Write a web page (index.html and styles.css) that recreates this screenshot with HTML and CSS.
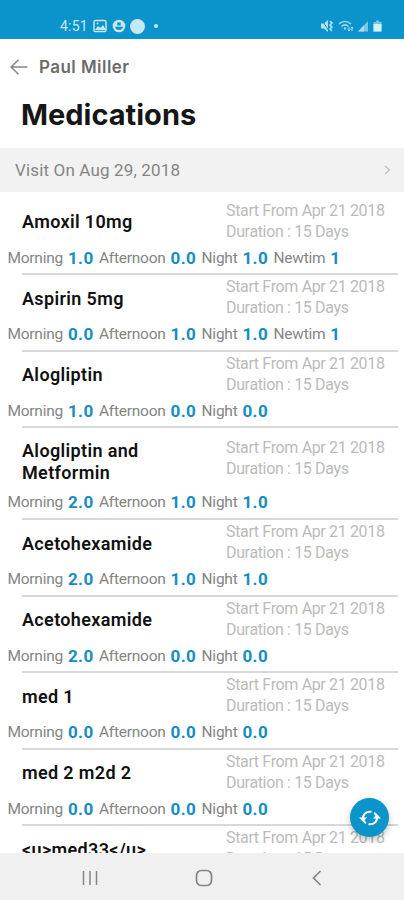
FILE: index.html
```html
<!DOCTYPE html>
<html lang="en">
<head>
    <meta charset="UTF-8">
    <meta name="viewport" content="width=device-width, initial-scale=1.0">
    <title>Medications</title>
    <link rel="stylesheet" href="styles.css">
</head>
<body>
    <div class="status-bar">
        <div class="status-left">
            <span class="time">4:51</span>
            <svg class="ic-photo" width="14" height="14" viewBox="0 0 14 14"><rect x="1" y="1.5" width="12" height="11" rx="1.5" fill="none" stroke="#c5e8f4" stroke-width="1.5"/><path d="M2 11l3-4 2.2 2L10 6l3 5z" fill="#c5e8f4"/><circle cx="4.5" cy="4.5" r="1" fill="#c5e8f4"/></svg>
            <svg class="ic-face" width="14" height="14" viewBox="0 0 14 14"><circle cx="7" cy="7" r="6.3" fill="#c5e8f4"/><path d="M5.3 3.4h3.4v3H5.3zM3 7.8h8c-.5 2.2-2 3.3-4 3.3S3.500 10 3 7.800z" fill="#0b94cc"/></svg>
            <span class="blob"></span>
            <span class="dot"></span>
        </div>
        <svg class="status-right" width="62" height="14" viewBox="0 0 62 14" fill="#b5e2f2">
            <path d="M0 4.500h3L7 1v12L3 9.500H0z"/>
            <path d="M1 1l7 11" stroke="#0b94cc" stroke-width="1"/>
            <path d="M9 2l2 2-2 2 2 2-2 2 2 2" fill="none" stroke="#b5e2f2" stroke-width="1.600"/>
            <path d="M18 5c3.500-3.300 8.500-3.300 12 0M20.500 7.500c2.200-2 4.800-2 7 0" fill="none" stroke="#9bd5ec" stroke-width="1.600"/>
            <path d="M22.500 9c1-.9 2-.9 3 0L24 11z"/>
            <path d="M28 8v4M26.700 10.500L28 12l1.300-1.500M31 12V8M29.800 9.300L31 8l1.200 1.300" fill="none" stroke="#b5e2f2"/>
            <path d="M37 12.500L47 2v10.500z" fill="#78c5e4"/>
            <path d="M37 12.500l6-6.300v6.300z" fill="#a5daee"/>
            <path d="M52.500 3H55V1.500h3V3h2.500v9.500h-8z" fill="#78c5e4"/>
            <path d="M52.500 5h8v7.500h-8z" fill="#d4f0f8"/>
        </svg>
    </div>

    <header>
        <a class="back" href="#">
            <svg width="18" height="16" viewBox="0 0 18 16" fill="none" stroke="#858585" stroke-width="1.400"><path d="M17.500 8H1M8.500 .7L1 8l7.500 7.300"/></svg>
            <span>Paul Miller</span>
        </a>
        <h1>Medications</h1>
    </header>

    <div class="visit">
        <span>Visit On Aug 29, 2018</span>
        <svg width="7" height="10" viewBox="0 0 7 10" fill="none" stroke="#bdbdbd" stroke-width="1.200"><path d="M1 1l4.500 4L1 9"/></svg>
    </div>

    <main>
        <div class="med">
            <div class="top">
                <h2>Amoxil 10mg</h2>
                <p>Start From Apr 21 2018<br>Duration : 15 Days</p>
            </div>
            <div class="doses"><span>Morning</span><b>1.0</b><span>Afternoon</span><b>0.0</b><span>Night</span><b>1.0</b><span>Newtim</span><b>1</b></div>
        </div>
        <div class="med">
            <div class="top">
                <h2>Aspirin 5mg</h2>
                <p>Start From Apr 21 2018<br>Duration : 15 Days</p>
            </div>
            <div class="doses"><span>Morning</span><b>0.0</b><span>Afternoon</span><b>1.0</b><span>Night</span><b>1.0</b><span>Newtim</span><b>1</b></div>
        </div>
        <div class="med">
            <div class="top">
                <h2>Alogliptin</h2>
                <p>Start From Apr 21 2018<br>Duration : 15 Days</p>
            </div>
            <div class="doses"><span>Morning</span><b>1.0</b><span>Afternoon</span><b>0.0</b><span>Night</span><b>0.0</b></div>
        </div>
        <div class="med tall">
            <div class="top">
                <h2>Alogliptin and Metformin</h2>
                <p>Start From Apr 21 2018<br>Duration : 15 Days</p>
            </div>
            <div class="doses"><span>Morning</span><b>2.0</b><span>Afternoon</span><b>1.0</b><span>Night</span><b>1.0</b></div>
        </div>
        <div class="med">
            <div class="top">
                <h2>Acetohexamide</h2>
                <p>Start From Apr 21 2018<br>Duration : 15 Days</p>
            </div>
            <div class="doses"><span>Morning</span><b>2.0</b><span>Afternoon</span><b>1.0</b><span>Night</span><b>1.0</b></div>
        </div>
        <div class="med">
            <div class="top">
                <h2>Acetohexamide</h2>
                <p>Start From Apr 21 2018<br>Duration : 15 Days</p>
            </div>
            <div class="doses"><span>Morning</span><b>2.0</b><span>Afternoon</span><b>0.0</b><span>Night</span><b>0.0</b></div>
        </div>
        <div class="med">
            <div class="top">
                <h2>med 1</h2>
                <p>Start From Apr 21 2018<br>Duration : 15 Days</p>
            </div>
            <div class="doses"><span>Morning</span><b>0.0</b><span>Afternoon</span><b>0.0</b><span>Night</span><b>0.0</b></div>
        </div>
        <div class="med">
            <div class="top">
                <h2>med 2 m2d 2</h2>
                <p>Start From Apr 21 2018<br>Duration : 15 Days</p>
            </div>
            <div class="doses"><span>Morning</span><b>0.0</b><span>Afternoon</span><b>0.0</b><span>Night</span><b>0.0</b></div>
        </div>
        <div class="med">
            <div class="top">
                <h2>&lt;u&gt;med33&lt;/u&gt;</h2>
                <p>Start From Apr 21 2018<br>Duration : 15 Days</p>
            </div>
        </div>
    </main>

    <button class="refresh" aria-label="Refresh">
        <svg width="22" height="20" viewBox="0 0 22 20" fill="none" stroke="#fff" stroke-width="2"><path d="M4 10.500C3.800 6 7.500 3 12.500 3.800M18 9.500c.2 4.500-3.500 7.500-8.500 6.700"/><path d="M15 5c1.800.9 2.800 2.500 3 4.500M7 15c-1.800-.9-2.800-2.500-3-4.500"/><path d="M14 10.500h8l-4-4.300zM0 9.500h8l-4 4.300z" fill="#fff" stroke="none"/></svg>
    </button>

    <nav>
        <svg width="16" height="16" viewBox="0 0 16 16" stroke="#858585" stroke-width="1.500"><path d="M1.500 1v14M8 1v14M14.500 1v14"/></svg>
        <svg class="home" width="18" height="18" viewBox="0 0 18 18" fill="none" stroke="#858585" stroke-width="1.700"><rect x="1.500" y="1.500" width="15" height="15" rx="5"/></svg>
        <svg width="10" height="16" viewBox="0 0 10 16" fill="none" stroke="#858585" stroke-width="1.700"><path d="M8.500 1L1.500 8l7 7"/></svg>
    </nav>
</body>
</html>
```
FILE: styles.css
```css
* {
    box-sizing: border-box;
}

body {
    margin: 0;
    height: 900px;
    display: flex;
    flex-direction: column;
    overflow: hidden;
    background-color: #fff;
    font-family: Roboto, sans-serif;
}

.status-bar {
    flex: none;
    height: 39px;
    padding: 13px 21px 0 60px;
    display: flex;
    justify-content: space-between;
    align-items: center;
    background-color: #0b94cc;
}

.status-left {
    display: flex;
    align-items: center;
}

.time {
    width: 33px;
    color: #c5e8f4;
    font-size: 14px;
    line-height: 20px;
    letter-spacing: 0.2px;
}

.ic-face {
    margin-left: 5px;
}

.blob {
    width: 15px;
    height: 15px;
    margin-left: 4px;
    border-radius: 50%;
    background-color: #c5e8f4;
}

.dot {
    width: 4px;
    height: 4px;
    margin-left: 9px;
    border-radius: 50%;
    background-color: #c5e8f4;
}

header {
    flex: none;
    height: 109px;
    padding: 16px 10px 0;
    font-family: Inter, sans-serif;
}

.back {
    display: flex;
    align-items: center;
    gap: 11px;
    height: 24px;
    color: #6b6b6b;
    font-size: 17px;
    font-weight: 600;
    letter-spacing: 0.45px;
    text-decoration: none;
}

h1 {
    margin: 18px 0 0 11px;
    color: #161616;
    font-size: 29px;
    font-weight: 700;
    line-height: 36px;
}

.visit {
    flex: none;
    height: 44px;
    padding: 0 13px 0 15px;
    display: flex;
    justify-content: space-between;
    align-items: center;
    background-color: #f2f2f2;
    color: #858585;
    font-size: 17px;
    letter-spacing: 0.15px;
}

main {
    flex: 1;
    min-height: 0;
    padding-top: 5.500px;
    overflow: hidden;
}

.med {
    position: relative;
    height: 76.600px;
}

.med.tall {
    height: 91.800px;
}

/* divider is inset from the left */
.med::after {
    content: "";
    position: absolute;
    left: 22px;
    right: 6px;
    bottom: -1px;
    height: 2px;
    background-color: #d6d8d9;
}

.top {
    display: flex;
    align-items: center;
    height: 50px;
    padding-left: 22px;
}

.tall .top {
    height: 65px;
    padding-top: 5px;
}

h2 {
    width: 204px;
    margin: -1px 0 0;
    padding-right: 60px;
    color: #111;
    font-size: 18px;
    font-weight: 600;
    line-height: 22px;
    letter-spacing: 0.35px;
}

.top p {
    margin: -4px 0 0;
    color: #bbb;
    font-size: 16px;
    line-height: 21px;
    letter-spacing: -0.35px;
    white-space: nowrap;
}

.tall .top p {
    margin-top: -9px;
}

.doses {
    display: flex;
    align-items: center;
    height: 20px;
    padding-left: 7.500px;
    color: #858585;
    font-size: 15.500px;
    letter-spacing: -0.25px;
}

.doses b {
    width: 36px;
    padding-left: 5px;
    color: #168dc2;
    font-size: 17px;
    letter-spacing: 0.4px;
}

.refresh {
    position: absolute;
    left: 350px;
    top: 798px;
    width: 39px;
    height: 39px;
    padding: 0;
    display: flex;
    justify-content: center;
    align-items: center;
    border: none;
    border-radius: 50%;
    background-color: #0b94cc;
    box-shadow: 0 3px 6px rgba(0, 0, 0, 0.25);
}

nav {
    flex: none;
    height: 47px;
    padding: 2px 82px 0;
    display: flex;
    justify-content: space-between;
    align-items: center;
    background-color: #f0f0f0;
}

.home {
    margin-right: 3px;
}
```
